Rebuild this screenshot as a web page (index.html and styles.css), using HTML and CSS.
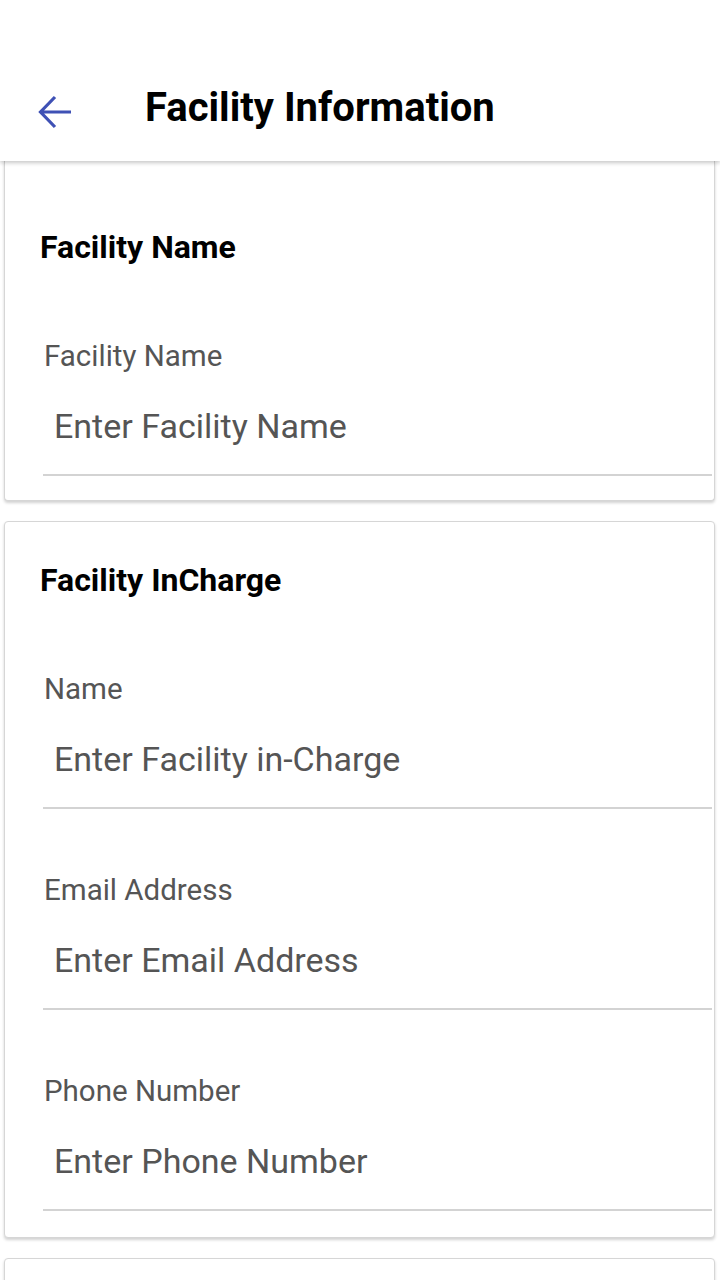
FILE: index.html
```html
<!DOCTYPE html>
<html>
<head>
<meta charset="utf-8">
<link rel="stylesheet" href="styles.css">
</head>
<body>
<header class="appbar">
  <div class="appbar-back">
    <svg width="34" height="34" viewBox="0 0 34 34"><path d="M33 17H3M17 2L2.5 17L17 32" fill="none" stroke="#3f51b5" stroke-width="3.2"/></svg>
  </div>
  <h1 class="appbar-title">Facility Information</h1>
</header>
<main class="content">
  <section class="card card-first">
    <h2 class="card-title">Facility Name</h2>
    <div class="field">
      <div class="field-label">Facility Name</div>
      <div class="field-input">Enter Facility Name</div>
    </div>
  </section>
  <section class="card">
    <h2 class="card-title">Facility InCharge</h2>
    <div class="field">
      <div class="field-label">Name</div>
      <div class="field-input">Enter Facility in-Charge</div>
    </div>
    <div class="field">
      <div class="field-label">Email Address</div>
      <div class="field-input">Enter Email Address</div>
    </div>
    <div class="field">
      <div class="field-label">Phone Number</div>
      <div class="field-input">Enter Phone Number</div>
    </div>
  </section>
  <section class="card card-last"></section>
</main>
</body>
</html>
```
FILE: styles.css
```css
html, body {
  margin: 0;
  padding: 0;
  background: #ffffff;
  font-family: Roboto, "Liberation Sans", sans-serif;
  overflow: hidden;
  height: 1280px;
}
.appbar {
  position: relative;
  z-index: 2;
  height: 161px;
  background: #fff;
  box-shadow: 0 2px 4px rgba(0,0,0,0.22);
  display: flex;
  align-items: flex-end;
  box-sizing: border-box;
  padding-bottom: 28px;
}
.appbar-back {
  width: 145px;
  padding-left: 38px;
  box-sizing: border-box;
  display: flex;
  align-items: center;
  height: 50px;
  margin-bottom: -4px;
}
.appbar-title {
  margin: 0;
  font-size: 40px;
  font-weight: 700;
  color: #000;
  line-height: 50px;
}
.content {
  display: flex;
  flex-direction: column;
  gap: 20px;
  padding: 0 5px 0 4px;
  height: 1119px;
  overflow: hidden;
}
.card {
  flex: none;
  border: 1px solid #d6d6d6;
  border-radius: 4px;
  box-shadow: 0 2px 3px rgba(0,0,0,0.18);
  background: #fff;
  padding: 38px 2px 26px 35px;
}
.card-first {
  border-top: none;
  border-radius: 0 0 4px 4px;
  padding-top: 66px;
  padding-bottom: 24px;
}
.card-last {
  height: 60px;
}
.card-title {
  margin: 0;
  font-size: 32px;
  font-weight: 700;
  color: #000;
  line-height: 40px;
}
.field {
  margin-left: 3px;
  padding-left: 1px;
  border-bottom: 2px solid #d3d3d3;
  margin-top: 71px;
}
.field + .field {
  margin-top: 63px;
}
.field-label {
  font-size: 29.5px;
  color: #555;
  line-height: 36px;
}
.field-input {
  font-size: 34px;
  color: #555;
  padding-left: 10px;
  line-height: 40px;
  padding-top: 32px;
  padding-bottom: 28px;
}
```
